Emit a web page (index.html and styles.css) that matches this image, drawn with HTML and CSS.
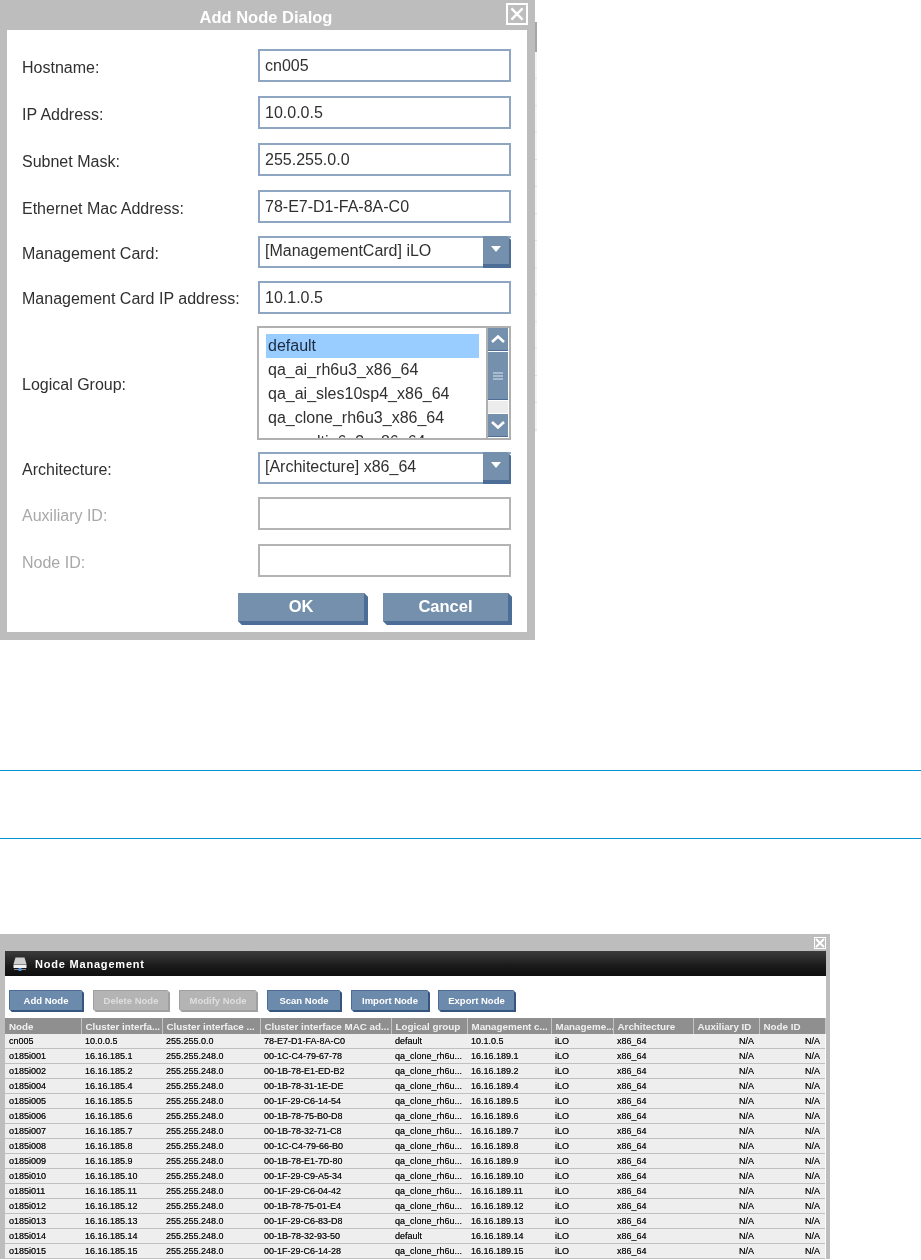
FILE: index.html
```html
<!DOCTYPE html>
<html lang="en">
<head>
    <meta charset="UTF-8">
    <meta name="viewport" content="width=device-width, initial-scale=1.0">
    <title>Add Node Dialog</title>
    <link rel="stylesheet" href="styles.css">
</head>
<body>
    <div class="dialog-wrap">
        <div class="dialog">
            <div class="dialog-title">
                <span>Add Node Dialog</span>
                <button class="dialog-close" aria-label="Close">
                    <svg viewBox="0 0 20 20" width="16" height="16"><path d="M3 3L17 17M17 3L3 17" stroke="#fff" stroke-width="3" fill="none"/></svg>
                </button>
            </div>
            <div class="dialog-body">
                <div class="form-row"><label>Hostname:</label><input class="field" type="text" value="cn005"></div>
                <div class="form-row"><label>IP Address:</label><input class="field" type="text" value="10.0.0.5"></div>
                <div class="form-row"><label>Subnet Mask:</label><input class="field" type="text" value="255.255.0.0"></div>
                <div class="form-row row-mac"><label>Ethernet Mac Address:</label><input class="field" type="text" value="78-E7-D1-FA-8A-C0"></div>
                <div class="form-row row-combo">
                    <label>Management Card:</label>
                    <div class="combo">
                        <span class="combo-text">[ManagementCard] iLO</span>
                        <span class="combo-arrow"><svg viewBox="0 0 10 6" width="10" height="6"><path d="M0 0H10L5 6Z" fill="#fff"/></svg></span>
                    </div>
                </div>
                <div class="form-row row-ip"><label>Management Card IP address:</label><input class="field" type="text" value="10.1.0.5"></div>
                <div class="form-row row-list">
                    <label>Logical Group:</label>
                    <div class="listbox">
                        <ul class="list-items">
                            <li class="selected">default</li>
                            <li>qa_ai_rh6u3_x86_64</li>
                            <li>qa_ai_sles10sp4_x86_64</li>
                            <li>qa_clone_rh6u3_x86_64</li>
                            <li>qa_multi_6u3_x86_64</li>
                        </ul>
                        <div class="list-scroll">
                            <span class="scroll-btn"><svg viewBox="0 0 14 8" width="14" height="8"><path d="M1 7L7 1.5L13 7" stroke="#fff" stroke-width="2.6" fill="none"/></svg></span>
                            <span class="scroll-thumb"><svg viewBox="0 0 10 8" width="10" height="8"><path d="M0 1H10M0 4H10M0 7H10" stroke="#dfe6ee" stroke-width="1"/></svg></span>
                            <span class="scroll-track"></span>
                            <span class="scroll-btn"><svg viewBox="0 0 14 8" width="14" height="8"><path d="M1 1L7 6.5L13 1" stroke="#fff" stroke-width="2.6" fill="none"/></svg></span>
                        </div>
                    </div>
                </div>
                <div class="form-row row-combo">
                    <label>Architecture:</label>
                    <div class="combo">
                        <span class="combo-text">[Architecture] x86_64</span>
                        <span class="combo-arrow"><svg viewBox="0 0 10 6" width="10" height="6"><path d="M0 0H10L5 6Z" fill="#fff"/></svg></span>
                    </div>
                </div>
                <div class="form-row row-off"><label>Auxiliary ID:</label><input class="field" type="text" disabled></div>
                <div class="form-row row-off"><label>Node ID:</label><input class="field" type="text" disabled></div>
                <div class="dialog-buttons">
                    <button class="btn btn-ok">OK</button>
                    <button class="btn btn-cancel">Cancel</button>
                </div>
            </div>
        </div>
        <div class="page-edge"><span class="page-thumb"></span><span class="page-ticks"></span></div>
    </div>

    <hr class="rule rule-first">
    <hr class="rule rule-second">

    <div class="window">
        <div class="window-top">
            <svg viewBox="0 0 10 10" width="10" height="10"><path d="M1 1L9 9M9 1L1 9" stroke="#fff" stroke-width="2"/></svg>
        </div>
        <div class="window-body">
            <div class="window-head">
                <svg viewBox="0 0 14 14" width="14" height="14">
                    <path d="M2.5 0.5H11.5L13.5 7H0.5Z" fill="#cfcfcf"/>
                    <rect x="0.5" y="7.5" width="13" height="3.5" fill="#f2f2f2"/>
                    <rect x="1" y="12" width="12" height="1" fill="#8c8c8c"/>
                    <rect x="5.5" y="11" width="3" height="3" fill="#4f8fe0"/>
                </svg>
                <span>Node Management</span>
            </div>
            <div class="toolbar">
                <button class="tool-btn w-add">Add Node</button>
                <button class="tool-btn off w-del">Delete Node</button>
                <button class="tool-btn off w-mod">Modify Node</button>
                <button class="tool-btn w-scan">Scan Node</button>
                <button class="tool-btn w-imp">Import Node</button>
                <button class="tool-btn w-exp">Export Node</button>
            </div>
            <table class="grid">
                <colgroup>
                    <col class="c1"><col class="c2"><col class="c3"><col class="c4"><col class="c5">
                    <col class="c6"><col class="c7"><col class="c8"><col class="c9"><col class="c10">
                </colgroup>
                <thead>
                    <tr>
                        <th>Node</th><th>Cluster interfa...</th><th>Cluster interface ...</th><th>Cluster interface MAC ad...</th><th>Logical group</th>
                        <th>Management c...</th><th>Manageme...</th><th>Architecture</th><th>Auxiliary ID</th><th>Node ID</th>
                    </tr>
                </thead>
                <tbody>
                    <tr><td>cn005</td><td>10.0.0.5</td><td>255.255.0.0</td><td>78-E7-D1-FA-8A-C0</td><td>default</td><td>10.1.0.5</td><td>iLO</td><td>x86_64</td><td class="num">N/A</td><td class="num">N/A</td></tr>
                    <tr><td>o185i001</td><td>16.16.185.1</td><td>255.255.248.0</td><td>00-1C-C4-79-67-78</td><td>qa_clone_rh6u...</td><td>16.16.189.1</td><td>iLO</td><td>x86_64</td><td class="num">N/A</td><td class="num">N/A</td></tr>
                    <tr><td>o185i002</td><td>16.16.185.2</td><td>255.255.248.0</td><td>00-1B-78-E1-ED-B2</td><td>qa_clone_rh6u...</td><td>16.16.189.2</td><td>iLO</td><td>x86_64</td><td class="num">N/A</td><td class="num">N/A</td></tr>
                    <tr><td>o185i004</td><td>16.16.185.4</td><td>255.255.248.0</td><td>00-1B-78-31-1E-DE</td><td>qa_clone_rh6u...</td><td>16.16.189.4</td><td>iLO</td><td>x86_64</td><td class="num">N/A</td><td class="num">N/A</td></tr>
                    <tr><td>o185i005</td><td>16.16.185.5</td><td>255.255.248.0</td><td>00-1F-29-C6-14-54</td><td>qa_clone_rh6u...</td><td>16.16.189.5</td><td>iLO</td><td>x86_64</td><td class="num">N/A</td><td class="num">N/A</td></tr>
                    <tr><td>o185i006</td><td>16.16.185.6</td><td>255.255.248.0</td><td>00-1B-78-75-B0-D8</td><td>qa_clone_rh6u...</td><td>16.16.189.6</td><td>iLO</td><td>x86_64</td><td class="num">N/A</td><td class="num">N/A</td></tr>
                    <tr><td>o185i007</td><td>16.16.185.7</td><td>255.255.248.0</td><td>00-1B-78-32-71-C8</td><td>qa_clone_rh6u...</td><td>16.16.189.7</td><td>iLO</td><td>x86_64</td><td class="num">N/A</td><td class="num">N/A</td></tr>
                    <tr><td>o185i008</td><td>16.16.185.8</td><td>255.255.248.0</td><td>00-1C-C4-79-66-B0</td><td>qa_clone_rh6u...</td><td>16.16.189.8</td><td>iLO</td><td>x86_64</td><td class="num">N/A</td><td class="num">N/A</td></tr>
                    <tr><td>o185i009</td><td>16.16.185.9</td><td>255.255.248.0</td><td>00-1B-78-E1-7D-80</td><td>qa_clone_rh6u...</td><td>16.16.189.9</td><td>iLO</td><td>x86_64</td><td class="num">N/A</td><td class="num">N/A</td></tr>
                    <tr><td>o185i010</td><td>16.16.185.10</td><td>255.255.248.0</td><td>00-1F-29-C9-A5-34</td><td>qa_clone_rh6u...</td><td>16.16.189.10</td><td>iLO</td><td>x86_64</td><td class="num">N/A</td><td class="num">N/A</td></tr>
                    <tr><td>o185i011</td><td>16.16.185.11</td><td>255.255.248.0</td><td>00-1F-29-C6-04-42</td><td>qa_clone_rh6u...</td><td>16.16.189.11</td><td>iLO</td><td>x86_64</td><td class="num">N/A</td><td class="num">N/A</td></tr>
                    <tr><td>o185i012</td><td>16.16.185.12</td><td>255.255.248.0</td><td>00-1B-78-75-01-E4</td><td>qa_clone_rh6u...</td><td>16.16.189.12</td><td>iLO</td><td>x86_64</td><td class="num">N/A</td><td class="num">N/A</td></tr>
                    <tr><td>o185i013</td><td>16.16.185.13</td><td>255.255.248.0</td><td>00-1F-29-C6-83-D8</td><td>qa_clone_rh6u...</td><td>16.16.189.13</td><td>iLO</td><td>x86_64</td><td class="num">N/A</td><td class="num">N/A</td></tr>
                    <tr><td>o185i014</td><td>16.16.185.14</td><td>255.255.248.0</td><td>00-1B-78-32-93-50</td><td>default</td><td>16.16.189.14</td><td>iLO</td><td>x86_64</td><td class="num">N/A</td><td class="num">N/A</td></tr>
                    <tr><td>o185i015</td><td>16.16.185.15</td><td>255.255.248.0</td><td>00-1F-29-C6-14-28</td><td>qa_clone_rh6u...</td><td>16.16.189.15</td><td>iLO</td><td>x86_64</td><td class="num">N/A</td><td class="num">N/A</td></tr>
                </tbody>
            </table>
        </div>
    </div>
</body>
</html>
```

FILE: styles.css
```css
body {
    font-family: "Liberation Sans", Arial, sans-serif;
    background-color: #ffffff;
    margin: 0;
    height: 1260px;
    overflow: hidden;
}

/* Add node dialog */
.dialog-wrap {
    display: flex;
}

.dialog {
    width: 535px;
    height: 640px;
    flex: none;
    box-sizing: border-box;
    background-color: #bdbdbd;
    padding: 0 8px 8px 7px;
    display: flex;
    flex-direction: column;
    filter: blur(0.4px);
}

.page-edge {
    width: 2px;
    display: flex;
    flex-direction: column;
    padding-top: 22px;
}

.page-thumb {
    height: 30px;
    background-color: #a6a6a6;
}

.page-ticks {
    height: 380px;
    background: repeating-linear-gradient(#f6f6f6 0, #f6f6f6 26px, #e2e2e2 26px, #e2e2e2 27px);
}

.dialog-title {
    height: 30px;
    flex: none;
    display: flex;
    align-items: center;
    justify-content: center;
    position: relative;
    color: #ffffff;
    font-size: 16.5px;
    font-weight: bold;
}

.dialog-title span {
    margin-top: 5px;
    margin-right: 2px;
}

.dialog-close {
    position: absolute;
    right: -1px;
    top: 3px;
    width: 22px;
    height: 22px;
    padding: 0;
    background: none;
    border: 2px solid #ffffff;
    display: flex;
    align-items: center;
    justify-content: center;
}

.dialog-body {
    flex: 1;
    background-color: #ffffff;
    padding: 19px 16px 0 15px;
    display: flex;
    flex-direction: column;
}

.form-row {
    display: flex;
    align-items: center;
    height: 33px;
    flex: none;
    margin-bottom: 14px;
    font-size: 16px;
    color: #303030;
}

.form-row label {
    width: 236px;
    flex: none;
    padding-top: 4px;
    white-space: nowrap;
}

.field {
    width: 253px;
    height: 33px;
    box-sizing: border-box;
    border: 2px solid #8ea6c2;
    background-color: #ffffff;
    padding: 0 5px;
    font-family: inherit;
    font-size: 16px;
    color: #303030;
    outline: none;
}

.row-mac {
    margin-bottom: 13px;
}

.row-combo {
    height: 32px;
    margin-bottom: 13px;
}

.row-ip {
    margin-bottom: 12px;
}

.row-ip label {
    padding-top: 3px;
}

.row-list {
    height: 114px;
    margin-bottom: 12px;
}

.row-off label {
    color: #a8a8a8;
}

.row-off .field {
    border-color: #b4b4b4;
}

.combo {
    width: 254px;
    height: 32px;
    box-sizing: border-box;
    display: flex;
    border: 2px solid #8ea6c2;
    border-right: none;
    background-color: #ffffff;
}

.combo-text {
    flex: 1;
    padding: 0 5px 3px 5px;
    font-size: 16px;
    line-height: 25px;
}

.combo-arrow {
    width: 28px;
    margin-top: -2px;
    margin-bottom: -2px;
    background-color: #7590ad;
    border-right: 2px solid #4c6e96;
    border-bottom: 4px solid #4c6e96;
    box-sizing: border-box;
    clip-path: polygon(0 0, 24px 0, 100% 4px, 100% 100%, 0 100%);
    display: flex;
    align-items: center;
    justify-content: center;
    padding-bottom: 2px;
}

.listbox {
    width: 255px;
    height: 114px;
    box-sizing: border-box;
    margin-left: -1px;
    border: 2px solid #b0b0b0;
    display: flex;
    overflow: hidden;
}

.list-items {
    flex: 1;
    list-style: none;
    margin: 0;
    padding: 6px 7px 0 7px;
    font-size: 16px;
    color: #303030;
    overflow: hidden;
}

.list-items li {
    height: 24px;
    line-height: 24px;
    padding-left: 2px;
    white-space: nowrap;
}

.list-items .selected {
    background-color: #99ccff;
    color: #1c2c40;
}

.list-scroll {
    width: 23px;
    flex: none;
    border-left: 2px solid #b0b0b0;
    padding: 0 1px 1px 0;
    display: flex;
    flex-direction: column;
    gap: 1px;
    box-sizing: border-box;
}

.scroll-btn {
    height: 23px;
    flex: none;
    background-color: #7590ad;
    border-bottom: 1px solid #4c6e96;
    box-sizing: border-box;
    display: flex;
    align-items: center;
    justify-content: center;
}

.scroll-thumb {
    height: 48px;
    flex: none;
    background-color: #7590ad;
    border-bottom: 1px solid #4c6e96;
    box-sizing: border-box;
    display: flex;
    align-items: center;
    justify-content: center;
}

.scroll-track {
    flex: 1;
    background-color: #ececec;
}

.dialog-buttons {
    display: flex;
    justify-content: flex-end;
    gap: 15px;
    margin-top: 2px;
    margin-right: -1px;
}

.btn {
    height: 32px;
    box-sizing: border-box;
    border: none;
    border-right: 4px solid #4c6e96;
    border-bottom: 4px solid #4c6e96;
    background-color: #7590ad;
    color: #ffffff;
    font-family: inherit;
    font-size: 16.5px;
    font-weight: bold;
    padding: 0 0 2px 0;
    clip-path: polygon(0 0, calc(100% - 4px) 0, 100% 4px, 100% 100%, 4px 100%, 0 calc(100% - 4px));
}

.btn-ok {
    width: 130px;
}

.btn-cancel {
    width: 129px;
}

/* Separator lines */
.rule {
    border: none;
    border-top: 1px solid #0096d6;
    margin: 0;
}

.rule-first {
    margin-top: 130px;
}

.rule-second {
    margin-top: 67px;
}

/* Node management window */
.window {
    width: 830px;
    margin-top: 95px;
    background-color: #bdbdbd;
    padding: 0 4px 0 5px;
    box-sizing: border-box;
    height: 325px;
    filter: blur(0.4px);
}

.window-top {
    height: 17px;
    display: flex;
    justify-content: flex-end;
    align-items: center;
}

.window-top svg {
    border: 1px solid #ffffff;
    display: block;
}

.window-body {
    background-color: #ffffff;
    height: 308px;
}

.window-head {
    height: 25px;
    background: linear-gradient(#3c3c3c, #1a1a1a 60%, #0e0e0e);
    color: #ffffff;
    display: flex;
    align-items: center;
    gap: 8px;
    padding-left: 8px;
    font-size: 11px;
    font-weight: bold;
    letter-spacing: 0.8px;
}

.toolbar {
    display: flex;
    gap: 9px;
    padding: 14px 0 6px 4px;
}

.tool-btn {
    height: 22px;
    box-sizing: border-box;
    border: 1px solid #4c6e96;
    border-right: 2px solid #35577f;
    border-bottom: 2px solid #35577f;
    background-color: #6c8aab;
    color: #ffffff;
    font-family: inherit;
    font-size: 9.5px;
    font-weight: bold;
    padding: 0 0 1px 0;
    clip-path: polygon(0 0, calc(100% - 3px) 0, 100% 3px, 100% 100%, 3px 100%, 0 calc(100% - 3px));
}

.tool-btn.off {
    background-color: #b4b4b4;
    border-color: #a0a0a0;
    color: #dedede;
}

.w-add { width: 75px; }
.w-del { width: 77px; }
.w-mod { width: 79px; }
.w-scan { width: 75px; }
.w-imp { width: 79px; margin-right: -1px; }
.w-exp { width: 78px; }

.grid {
    width: 820px;
    table-layout: fixed;
    border-collapse: collapse;
    font-size: 9px;
    color: #111111;
}

.c1 { width: 76px; }
.c2 { width: 81px; }
.c3 { width: 98px; }
.c4 { width: 131px; }
.c5 { width: 76px; }
.c6 { width: 84px; }
.c7 { width: 62px; }
.c8 { width: 80px; }
.c9 { width: 66px; }
.c10 { width: 66px; }

.grid th {
    height: 16px;
    padding: 0 0 0 4px;
    background-color: #8f8f8f;
    border-right: 1px solid #c4c4c4;
    color: #f0f0f0;
    font-size: 9.8px;
    font-weight: bold;
    text-align: left;
    white-space: nowrap;
    overflow: hidden;
}

.grid td {
    height: 14px;
    padding: 0 0 0 4px;
    background-color: #eeeeee;
    border-bottom: 1px solid #c0c0c0;
    white-space: nowrap;
    overflow: hidden;
    text-shadow: 0 0 0.6px #333333;
}

.grid td.num {
    text-align: right;
    padding-right: 5px;
}
```
